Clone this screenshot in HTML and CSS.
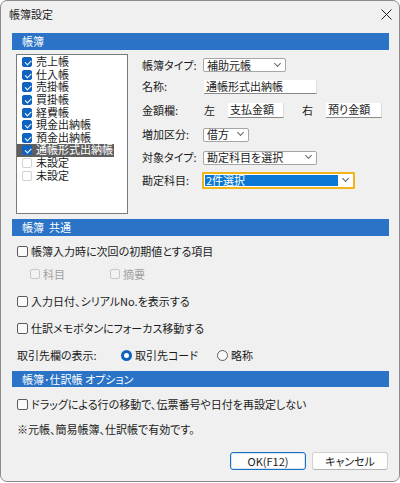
FILE: index.html
```html
<!DOCTYPE html>
<html lang="ja">

<head>
  <meta charset="UTF-8" />
  <title>帳簿設定</title>
  <link rel="stylesheet" href="styles.css">
</head>

<body>
  <div class="window">
    <div class="titlebar">
      <span class="title">帳簿設定</span>
      <svg class="close" width="11" height="11" viewBox="0 0 11 11">
        <path d="M0.5 0.5 L10.5 10.5 M10.5 0.5 L0.5 10.5" stroke="#222" stroke-width="1" fill="none" />
      </svg>
    </div>

    <div class="content">
      <div class="section-head">帳簿</div>

      <div class="books">
        <ul class="book-list">
          <li class="book-item"><span class="check on"></span>売上帳</li>
          <li class="book-item"><span class="check on"></span>仕入帳</li>
          <li class="book-item"><span class="check on"></span>売掛帳</li>
          <li class="book-item"><span class="check on"></span>買掛帳</li>
          <li class="book-item"><span class="check on"></span>経費帳</li>
          <li class="book-item"><span class="check on"></span>現金出納帳</li>
          <li class="book-item"><span class="check on"></span>預金出納帳</li>
          <li class="book-item selected"><span class="check on"></span>通帳形式出納帳</li>
          <li class="book-item"><span class="check empty"></span>未設定</li>
          <li class="book-item"><span class="check empty"></span>未設定</li>
        </ul>

        <div class="book-form">
          <span class="label">帳簿タイプ:</span>
          <div class="field">
            <span class="select w-type">補助元帳<i class="chevron"></i></span>
          </div>

          <span class="label">名称:</span>
          <div class="field">
            <span class="textbox w-name">通帳形式出納帳</span>
          </div>

          <span class="label">金額欄:</span>
          <div class="field amounts">
            <span class="side">左</span>
            <span class="textbox w-amount">支払金額</span>
            <span class="side right">右</span>
            <span class="textbox w-amount">預り金額</span>
          </div>

          <span class="label">増加区分:</span>
          <div class="field">
            <span class="select w-side">借方<i class="chevron"></i></span>
          </div>

          <span class="label">対象タイプ:</span>
          <div class="field">
            <span class="select w-target">勘定科目を選択<i class="chevron"></i></span>
          </div>

          <span class="label">勘定科目:</span>
          <div class="field">
            <span class="select focused w-account"><span class="highlight">2件選択</span><i class="chevron"></i></span>
          </div>
        </div>
      </div>

      <div class="section-head">帳簿&nbsp;&nbsp;共通</div>

      <div class="opt-row first">
        <span class="check"></span>帳簿入力時に次回の初期値とする項目
      </div>
      <div class="opt-row sub">
        <span class="sub-item"><span class="check disabled"></span>科目</span>
        <span class="sub-item"><span class="check disabled"></span>摘要</span>
      </div>
      <div class="opt-row">
        <span class="check"></span>入力日付、シリアルNo.を表示する
      </div>
      <div class="opt-row">
        <span class="check"></span>仕訳メモボタンにフォーカス移動する
      </div>
      <div class="opt-row">
        <span class="radio-label">取引先欄の表示:</span>
        <span class="radio-item"><span class="radio on"></span>取引先コード</span>
        <span class="radio-item"><span class="radio"></span>略称</span>
      </div>

      <div class="section-head third">帳簿･仕訳帳 オプション</div>

      <div class="opt-row">
        <span class="check"></span>ドラッグによる行の移動で、伝票番号や日付を再設定しない
      </div>
      <div class="opt-row note">※元帳、簡易帳簿、仕訳帳で有効です。</div>

      <div class="buttons">
        <button class="btn default">OK(F12)</button>
        <button class="btn">キャンセル</button>
      </div>
    </div>
  </div>
</body>

</html>
```

FILE: styles.css
```css
* {
  margin: 0;
  padding: 0;
  box-sizing: border-box;
}

body {
  background-color: #fff;
  color: #1b1b1b;
  font-family: "Noto Sans CJK JP", "Noto Sans", sans-serif;
  font-size: 11px;
  line-height: 13px;
  font-feature-settings: "palt";
}

.window {
  width: 400px;
  height: 482px;
  border: 1px solid #8c8c8c;
  border-radius: 7px;
  background-color: #f0f0f0;
  overflow: hidden;
}

.titlebar {
  height: 26px;
  display: flex;
  align-items: center;
  justify-content: space-between;
  padding: 0 7px 0 8px;
}

.content {
  padding: 6px 10px 0 11px;
}

.section-head {
  height: 17px;
  padding-left: 10px;
  display: flex;
  align-items: center;
  background-color: #2a73c6;
  color: #fff;
}

.section-head.third {
  height: 16px;
  margin-top: 6px;
}

/* 帳簿リスト */
.books {
  height: 169px;
  display: flex;
  padding: 4px 0 0 4px;
}

.book-list {
  width: 112px;
  height: 160px;
  border: 1px solid #7a7a7a;
  background-color: #fff;
  list-style: none;
  padding-top: 1px;
  font-family: "Liberation Sans", "Noto Sans CJK JP", sans-serif;
}

.book-item {
  width: max-content;
  height: 12.6px;
  line-height: 12px;
  display: flex;
  align-items: center;
  gap: 4px;
  padding-left: 5px;
  padding-right: 1px;
}

.book-item.selected {
  background-color: #5f5f5f;
  color: #fff;
}

.check {
  width: 11px;
  height: 11px;
  flex-shrink: 0;
  border: 1px solid #5c5c5c;
  border-radius: 2px;
  background-color: #fafafa;
  position: relative;
}

.book-list .check {
  width: 10px;
  height: 10px;
}

.check.on {
  background-color: #0f63c0;
  border-color: #0f63c0;
}

.check.on::after {
  content: "";
  position: absolute;
  left: 2px;
  top: 2px;
  width: 5px;
  height: 2.5px;
  border-left: 1.2px solid #fff;
  border-bottom: 1.2px solid #fff;
  transform: rotate(-45deg);
}

.check.empty {
  border-color: #d2d2d2;
  background-color: #fff;
}

.check.disabled {
  border-color: #c6c6c6;
  background-color: #f3f3f3;
}

/* 帳簿フォーム */
.book-form {
  margin-left: 14px;
  display: grid;
  grid-template-columns: 60px auto;
  grid-template-rows: 22px 21px 26px 23px 23px 23px;
  align-items: center;
}

.label {
  white-space: nowrap;
}

.field {
  display: flex;
  align-items: center;
}

.select {
  height: 14px;
  margin-left: 1px;
  padding: 0 5px 0 3px;
  display: flex;
  align-items: center;
  background-color: #fff;
  border: 1px solid #a5a5a5;
  border-radius: 2px;
  white-space: nowrap;
}

.chevron {
  margin-left: auto;
  width: 5px;
  height: 5px;
  border-right: 1px solid #666;
  border-bottom: 1px solid #666;
  transform: translateY(-2px) rotate(45deg);
}

.select.focused {
  height: 17px;
  padding: 0 5px 0 1px;
  border: 2px solid #f2b418;
  border-radius: 1px;
}

.highlight {
  width: 133px;
  height: 11px;
  padding-left: 1px;
  display: flex;
  align-items: center;
  background-color: #0a78d4;
  color: #fff;
}

.textbox {
  height: 14px;
  margin-left: 2px;
  padding-left: 2px;
  display: flex;
  align-items: center;
  background-color: #fff;
  border-bottom: 1px solid #8a8a8a;
  border-right: 1px solid #dcdcdc;
  white-space: nowrap;
}

.w-type { width: 83px; }
.w-name { width: 113px; }
.w-amount { width: 56px; }
.w-side { width: 46px; }
.w-target { width: 114px; }
.w-account { width: 153px; margin-left: 0; }

.amounts .side {
  margin-left: 2px;
  width: 24px;
}

.amounts .side.right {
  margin-left: 18px;
}

.amounts .textbox {
  height: 15px;
  margin-left: 0;
}

/* オプション */
.opt-row {
  height: 20px;
  margin-top: 7px;
  padding-left: 5px;
  display: flex;
  align-items: center;
  gap: 3px;
  white-space: nowrap;
}

.opt-row.first {
  margin-top: 5px;
}

.opt-row.sub {
  margin-top: 3px;
  padding-left: 18px;
  color: #a0a0a0;
  gap: 0;
}

.sub-item {
  width: 80px;
  display: flex;
  align-items: center;
  gap: 3px;
}

.sub-item .check {
  width: 10px;
  height: 10px;
  border-radius: 2px;
}

.radio-label {
  width: 101px;
}

.radio-item {
  width: 93px;
  display: flex;
  align-items: center;
  gap: 3px;
}

.radio {
  width: 11px;
  height: 11px;
  border: 1px solid #5c5c5c;
  border-radius: 50%;
  background-color: #fafafa;
}

.radio.on {
  border: 3px solid #0f63c0;
  background-color: #fff;
}

.opt-row.note {
  margin-top: 5px;
}

.buttons {
  margin-top: 13px;
  margin-right: 1px;
  display: flex;
  justify-content: flex-end;
  gap: 6px;
}

.btn {
  width: 76px;
  height: 18px;
  border: 1px solid #d0d0d0;
  border-bottom-color: #b5b5b5;
  border-radius: 3px;
  background-color: #fdfdfd;
  color: #1b1b1b;
  font-family: inherit;
  font-size: 11px;
  font-feature-settings: "palt";
}

.btn.default {
  border: 1px solid #1c6dc4;
  box-shadow: inset 0 0 0 1px #d6e6f6;
}
```
